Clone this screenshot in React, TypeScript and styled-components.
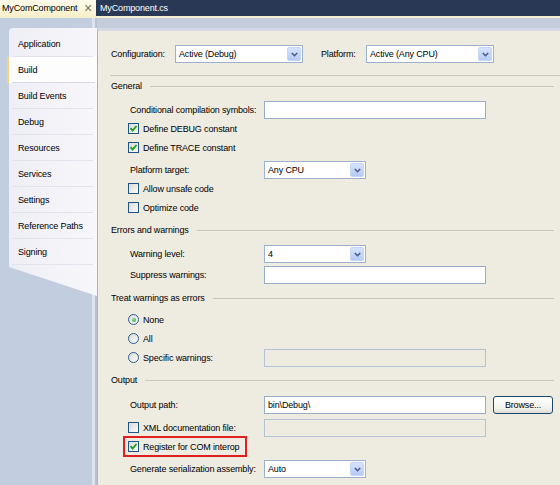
import React from "react";
import styled, { createGlobalStyle } from "styled-components";

const GlobalStyle = createGlobalStyle`
  html, body {
    margin: 0;
    padding: 0;
    background: #c4cddf;
  }
  body {
    font-family: "Liberation Sans", Arial, sans-serif;
    font-size: 9px;
    letter-spacing: -0.15px;
    color: #000;
  }
`;

const Window = styled.div`
  width: 560px;
  height: 485px;
  display: flex;
  flex-direction: column;
  overflow: hidden;
  background: #c5cddc;
`;

const TabBar = styled.div`
  height: 16px;
  display: flex;
  align-items: stretch;
  background: #293955;
  border-bottom: 2px solid #f6efcf;
`;

const DocTab = styled.div<{ $active?: boolean }>`
  display: flex;
  align-items: center;
  box-sizing: border-box;
  width: ${({ $active }) => ($active ? "96px" : "auto")};
  padding: ${({ $active }) => ($active ? "0 4px 0 2px" : "0 0 0 4px")};
  background: ${({ $active }) =>
    $active ? "linear-gradient(#fffcec, #f8f0cb)" : "transparent"};
  color: ${({ $active }) => ($active ? "#000" : "#fff")};
`;

const CloseMark = styled.span`
  margin-left: auto;
  color: #77766a;
  font-size: 14px;
  line-height: 1;
`;

const Body = styled.div`
  flex: 1;
  display: flex;
  min-height: 0;
`;

const SidebarCol = styled.div`
  width: 97px;
  flex-shrink: 0;
  padding-top: 10px;
  background: linear-gradient(
    to right,
    #c3cde0 0 92px,
    #dfe3ee 92px 95px,
    #b9c2d4 95px 97px
  );
`;

const SidePanel = styled.div`
  margin-left: 9px;
  width: 88px;
  height: 268px;
  box-sizing: border-box;
  padding-top: 3px;
  border-radius: 4px 0 0 0;
  background: linear-gradient(to right, #eeeef5, #f7f7fb);
  clip-path: polygon(-3px 0, 100% 0, 100% 100%, -3px calc(100% - 30px));
`;

const SideItem = styled.div<{ $selected?: boolean }>`
  height: 26px;
  box-sizing: border-box;
  display: flex;
  align-items: center;
  padding-left: 9px;
  margin-left: ${({ $selected }) => ($selected ? "-2px" : "0")};
  border-left: ${({ $selected }) => ($selected ? "2px solid #f3d37c" : "none")};
  background: ${({ $selected }) =>
    $selected
      ? "linear-gradient(#d6d8e2, #d6d8e2) no-repeat left 3px bottom / calc(100% - 5px) 1px, #fdfdfe"
      : "linear-gradient(#e2e3ec, #e2e3ec) no-repeat left 3px bottom / calc(100% - 7px) 1px"};
`;

const Content = styled.div`
  flex: 1;
  margin-top: 10px;
  border-top: 3px solid #d3d9e5;
  border-left: 1px solid #a9b2c5;
  background: #eeebe1;
  padding: 14px 6px 0 13px;
  display: flex;
  flex-direction: column;
`;

const ConfigRow = styled.div`
  height: 18px;
  display: flex;
  align-items: center;
`;

const ConfigLabel = styled.span<{ $w: number; $ml?: number }>`
  width: ${({ $w }) => $w}px;
  margin-left: ${({ $ml }) => $ml ?? 0}px;
`;

const Separator = styled.div`
  height: 1px;
  margin: 12px -6px 0 -1px;
  background: #c9c5b9;
`;

const SectionHeader = styled.div<{ $mt: number }>`
  height: 16px;
  margin-top: ${({ $mt }) => $mt}px;
  display: flex;
  align-items: center;
  gap: 8px;

  &::after {
    content: "";
    flex: 1;
    height: 1px;
    background: #cac6bb;
  }
`;

const Row = styled.div<{ $h?: number; $mt?: number }>`
  display: flex;
  align-items: center;
  height: ${({ $h }) => $h ?? 19}px;
  margin-top: ${({ $mt }) => $mt ?? 0}px;
  padding-left: 17px;
`;

const FieldLabel = styled.span`
  width: 134px;
  padding-left: 2px;
`;

const Choice = styled.div<{ $w?: number }>`
  display: flex;
  align-items: center;
  gap: 4px;
  width: ${({ $w }) => ($w ? `${$w}px` : "auto")};
`;

const CheckBox = styled.span`
  width: 11px;
  height: 11px;
  box-sizing: border-box;
  border: 1px solid #1f5586;
  background: linear-gradient(135deg, #dcdcd5, #fbfbf9);
  display: flex;
  align-items: center;
  justify-content: center;
`;

const RadioDot = styled.span`
  width: 11px;
  height: 11px;
  box-sizing: border-box;
  border-radius: 50%;
  border: 1px solid #2a5c8e;
  background: linear-gradient(135deg, #dcdcd5, #fbfbf9);
  display: flex;
  align-items: center;
  justify-content: center;
`;

const RadioFill = styled.span`
  width: 4px;
  height: 4px;
  border-radius: 50%;
  background: radial-gradient(circle at 35% 35%, #8ee08e, #21a121);
`;

const TextBox = styled.div<{ $w?: number; $disabled?: boolean }>`
  width: ${({ $w }) => $w ?? 222}px;
  height: 18px;
  box-sizing: border-box;
  border: 1px solid ${({ $disabled }) => ($disabled ? "#b3c3d4" : "#98aec8")};
  background: ${({ $disabled }) => ($disabled ? "#eeebe1" : "#fff")};
  padding-left: 3px;
  line-height: 16px;
`;

const SelectBox = styled.div<{ $w: number }>`
  width: ${({ $w }) => $w}px;
  height: 18px;
  box-sizing: border-box;
  display: flex;
  align-items: center;
  border: 1px solid #9cb2cc;
  background: #fff;
  padding: 1px;
`;

const SelectValue = styled.span`
  flex: 1;
  padding-left: 2px;
`;

const DropButton = styled.span`
  width: 14px;
  height: 14px;
  box-sizing: border-box;
  display: flex;
  align-items: center;
  justify-content: center;
  border: 1px solid #c6d5f8;
  border-radius: 2px;
  background: linear-gradient(#d6e2fe, #b6caf8);
`;

const Button = styled.div`
  width: 60px;
  height: 18px;
  box-sizing: border-box;
  margin-left: 7px;
  display: flex;
  align-items: center;
  justify-content: center;
  border: 1px solid #1d466f;
  border-radius: 3px;
  background: linear-gradient(#ffffff, #f3f2ec 70%, #dedcd2);
`;

const Highlight = styled.div`
  display: flex;
  align-items: center;
  gap: 4px;
  height: 21px;
  box-sizing: border-box;
  margin-left: -5px;
  padding: 0 6px 0 3px;
  border: 2px solid #e31e1e;
`;

const Check: React.FC<{ checked?: boolean }> = ({ checked }) => (
  <CheckBox>
    {checked && (
      <svg width="9" height="9" viewBox="0 0 9 9">
        <polyline
          points="1.5,4.2 3.6,6.5 7.5,2"
          fill="none"
          stroke="#21a121"
          strokeWidth="1.9"
        />
      </svg>
    )}
  </CheckBox>
);

const Radio: React.FC<{ checked?: boolean }> = ({ checked }) => (
  <RadioDot>{checked && <RadioFill />}</RadioDot>
);

const Select: React.FC<{ w: number; value: string }> = ({ w, value }) => (
  <SelectBox $w={w}>
    <SelectValue>{value}</SelectValue>
    <DropButton>
      <svg width="7" height="5" viewBox="0 0 7 5">
        <path d="M0.8 1 L3.5 3.7 L6.2 1" fill="none" stroke="#4b5f86" strokeWidth="1.6" />
      </svg>
    </DropButton>
  </SelectBox>
);

const pages = [
  "Application",
  "Build",
  "Build Events",
  "Debug",
  "Resources",
  "Services",
  "Settings",
  "Reference Paths",
  "Signing",
];

const App: React.FC = () => {
  return (
    <Window>
      <GlobalStyle />
      <TabBar>
        <DocTab $active>
          MyComComponent
          <CloseMark>×</CloseMark>
        </DocTab>
        <DocTab>MyComponent.cs</DocTab>
      </TabBar>
      <Body>
        <SidebarCol>
          <SidePanel>
            {pages.map((p) => (
              <SideItem key={p} $selected={p === "Build"}>
                {p}
              </SideItem>
            ))}
          </SidePanel>
        </SidebarCol>
        <Content>
          <ConfigRow>
            <ConfigLabel $w={64}>Configuration:</ConfigLabel>
            <Select w={128} value="Active (Debug)" />
            <ConfigLabel $w={45} $ml={18}>
              Platform:
            </ConfigLabel>
            <Select w={128} value="Active (Any CPU)" />
          </ConfigRow>
          <Separator />

          <SectionHeader $mt={2}>General</SectionHeader>
          <Row $h={18} $mt={7}>
            <FieldLabel>Conditional compilation symbols:</FieldLabel>
            <TextBox />
          </Row>
          <Row>
            <Choice>
              <Check checked />
              Define DEBUG constant
            </Choice>
          </Row>
          <Row>
            <Choice>
              <Check checked />
              Define TRACE constant
            </Choice>
          </Row>
          <Row $h={18} $mt={4}>
            <FieldLabel>Platform target:</FieldLabel>
            <Select w={102} value="Any CPU" />
          </Row>
          <Row>
            <Choice>
              <Check />
              Allow unsafe code
            </Choice>
          </Row>
          <Row>
            <Choice>
              <Check />
              Optimize code
            </Choice>
          </Row>

          <SectionHeader $mt={5}>Errors and warnings</SectionHeader>
          <Row $h={18} $mt={7}>
            <FieldLabel>Warning level:</FieldLabel>
            <Select w={102} value="4" />
          </Row>
          <Row $h={18} $mt={3}>
            <FieldLabel>Suppress warnings:</FieldLabel>
            <TextBox />
          </Row>

          <SectionHeader $mt={6}>Treat warnings as errors</SectionHeader>
          <Row $mt={4}>
            <Choice>
              <Radio checked />
              None
            </Choice>
          </Row>
          <Row>
            <Choice>
              <Radio />
              All
            </Choice>
          </Row>
          <Row>
            <Choice $w={136}>
              <Radio />
              Specific warnings:
            </Choice>
            <TextBox $disabled />
          </Row>

          <SectionHeader $mt={5}>Output</SectionHeader>
          <Row $h={18} $mt={8}>
            <FieldLabel>Output path:</FieldLabel>
            <TextBox>bin\Debug\</TextBox>
            <Button>Browse...</Button>
          </Row>
          <Row $mt={4}>
            <Choice $w={136}>
              <Check />
              XML documentation file:
            </Choice>
            <TextBox $disabled />
          </Row>
          <Row>
            <Highlight>
              <Check checked />
              Register for COM interop
            </Highlight>
          </Row>
          <Row $h={18} $mt={4}>
            <FieldLabel>Generate serialization assembly:</FieldLabel>
            <Select w={102} value="Auto" />
          </Row>
        </Content>
      </Body>
    </Window>
  );
};

export default App;
